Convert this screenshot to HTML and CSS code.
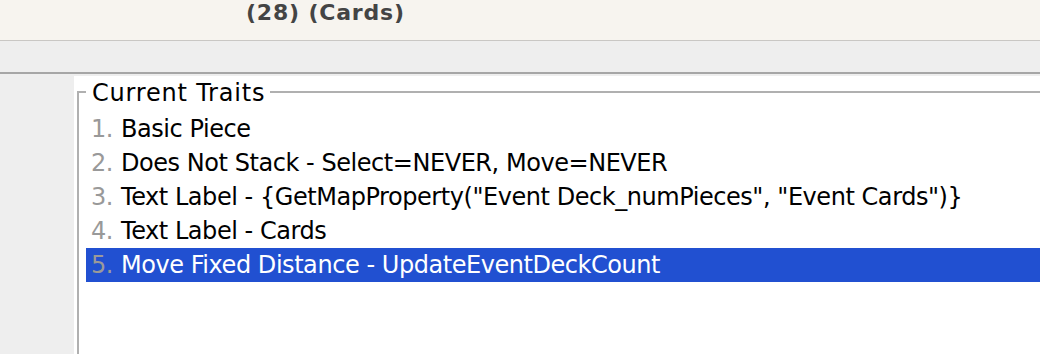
FILE: index.html
```html
<!DOCTYPE html>
<html>
<head>
<meta charset="utf-8">
<link rel="stylesheet" href="styles.css">
</head>
<body>
<div class="window">
  <div class="header"><span class="header-title">(28) (Cards)</span></div>
  <div class="toolbar"></div>
  <div class="main">
    <div class="sidebar"></div>
    <div class="panel">
      <fieldset class="traits">
        <legend class="traits-title">Current Traits</legend>
        <ul class="trait-list">
          <li class="trait"><span class="num">1.</span><span class="label">Basic Piece</span></li>
          <li class="trait"><span class="num">2.</span><span class="label">Does Not Stack - Select=NEVER, Move=NEVER</span></li>
          <li class="trait"><span class="num">3.</span><span class="label">Text Label - {GetMapProperty("Event Deck_numPieces", "Event Cards")}</span></li>
          <li class="trait"><span class="num">4.</span><span class="label">Text Label - Cards</span></li>
          <li class="trait selected"><span class="num">5.</span><span class="label">Move Fixed Distance - UpdateEventDeckCount</span></li>
        </ul>
      </fieldset>
    </div>
  </div>
</div>
</body>
</html>
```

FILE: styles.css
```css
html, body {
  margin: 0;
  padding: 0;
}
body {
  width: 1040px;
  height: 354px;
  overflow: hidden;
  background: #ffffff;
  font-family: "DejaVu Sans", "Liberation Sans", sans-serif;
}
.window {
  display: flex;
  flex-direction: column;
  height: 354px;
}
.header {
  flex: 0 0 auto;
  height: 41px;
  box-sizing: border-box;
  background: #f7f4ef;
  border-bottom: 1px solid #c9c7c4;
  padding-left: 246px;
}
.header-title {
  display: block;
  font-family: "DejaVu Sans", "Liberation Sans", sans-serif;
  font-weight: 700;
  font-size: 22px;
  line-height: 26px;
  letter-spacing: 0.8px;
  color: #444444;
}
.toolbar {
  flex: 0 0 auto;
  height: 33px;
  box-sizing: border-box;
  background: #eeeeee;
  border-bottom: 2px solid #a6a6a6;
}
.main {
  flex: 1 1 auto;
  display: flex;
  background: #eeeeee;
  padding-top: 2px;
  min-height: 0;
}
.sidebar {
  width: 74px;
  flex: 0 0 auto;
}
.panel {
  flex: 1 1 auto;
  display: flex;
  flex-direction: column;
  background: #ffffff;
  padding: 0 0 0 3px;
  min-width: 0;
  min-height: 0;
  overflow: hidden;
}
.traits {
  flex: 1 1 auto;
  margin: 0;
  padding: 0 0 0 7px;
  border: 2px solid #b0b0b0;
  border-right: none;
  border-bottom: none;
  min-width: 0;
  min-height: 0;
}
.traits-title {
  padding: 3px 5px 0 6px;
  font-size: 24px;
  line-height: 28px;
  letter-spacing: 0.8px;
  color: #000000;
}
.trait-list {
  list-style: none;
  margin: 5px 0 0 0;
  padding: 0;
}
.trait {
  display: flex;
  height: 34px;
  line-height: 34px;
  font-size: 24px;
  letter-spacing: -0.45px;
  padding-left: 5px;
  color: #000000;
  white-space: nowrap;
}
.num {
  width: 30px;
  flex: 0 0 auto;
  color: #999999;
}
.selected {
  background: #2150d1;
  color: #ffffff;
}
.selected .num {
  color: #9a9a9a;
}
```
